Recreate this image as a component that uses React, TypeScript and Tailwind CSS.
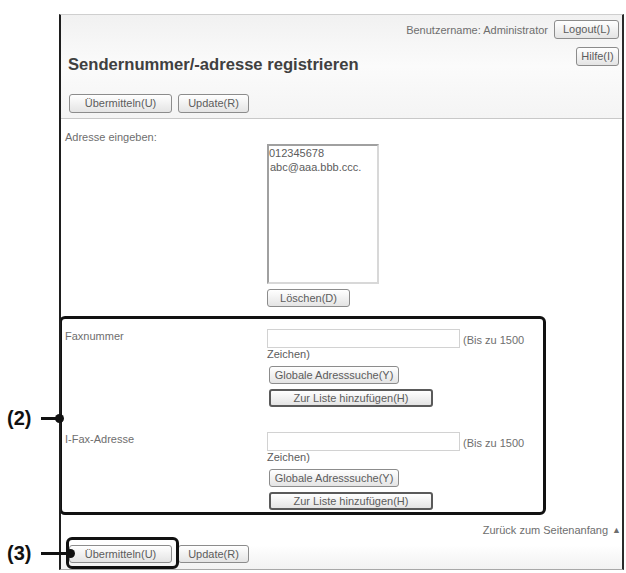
import React from "react";

const font = { fontFamily: '"Liberation Sans", Arial, sans-serif' };

function Btn({ className = "", children }: { className?: string; children: React.ReactNode }) {
  return (
    <div
      className={`flex items-center justify-center rounded-[3px] bg-gradient-to-b from-white to-[#e4e4e4] text-[11px] leading-none text-[#5c5c5c] ${className}`}
    >
      {children}
    </div>
  );
}

function Field({ label }: { label: string }) {
  return (
    <div className="grid grid-cols-[205px_1fr]">
      <div className="pl-[3px] pt-[1px] text-[11px] leading-[12px] text-[#6e6e6e]">{label}</div>
      <div className="flex flex-col items-start">
        <div className="flex items-center">
          <div className="h-[19px] w-[193px] border border-[#d2d2d2] bg-white" />
          <div className="ml-[3px] pt-[2px] text-[11px] leading-[12px] text-[#6e6e6e]">(Bis zu 1500</div>
        </div>
        <div className="text-[11px] leading-[12px] text-[#5c5c5c]">Zeichen)</div>
        <Btn className="ml-[2px] mt-[6px] h-[18px] w-[130px] border border-[#8c8c8c]">Globale Adresssuche(Y)</Btn>
        <Btn className="ml-[2px] mt-[5px] h-[18px] w-[164px] border-2 border-[#5a5a5a]">Zur Liste hinzufügen(H)</Btn>
      </div>
    </div>
  );
}

export default function App() {
  return (
    <div className="relative h-[573px] w-[626px] overflow-hidden bg-white" style={font}>
      <div className="ml-[59px] mt-[14px] flex h-[556px] w-[565px] flex-col overflow-hidden border-b border-l-2 border-r-2 border-t border-b-[#a8a8a8] border-l-[#1e1e1e] border-r-[#2a2a2a] border-t-[#cfcfcf]">
        {/* header */}
        <div className="flex h-[104px] flex-col border-b border-[#c8c8c8] bg-gradient-to-b from-[#f1f1f1] via-[#fbfbfb] to-[#f4f4f4]">
          <div className="mt-[5px] flex items-center justify-end gap-[6px] pr-[3px]">
            <span className="text-[11px] leading-[12px] text-[#6e6e6e]">Benutzername: Administrator</span>
            <Btn className="h-[19px] w-[65px] border border-[#8c8c8c]">Logout(L)</Btn>
          </div>
          <div className="mt-[8px] flex items-start justify-between pr-[3px]">
            <div className="mt-[8px] pl-[7px] text-[16.6px] font-bold leading-[20px] text-[#404040]">
              Sendernummer/-adresse registrieren
            </div>
            <Btn className="h-[19px] w-[43px] border border-[#8c8c8c]">Hilfe(I)</Btn>
          </div>
          <div className="mt-[19px] flex gap-[6px] pl-[8px]">
            <Btn className="h-[19px] w-[103px] border border-[#8c8c8c]">Übermitteln(U)</Btn>
            <Btn className="h-[19px] w-[71px] border border-[#8c8c8c]">Update(R)</Btn>
          </div>
        </div>

        {/* address list */}
        <div className="grid grid-cols-[206px_1fr] pt-[12px]">
          <div className="pl-[4px] text-[11px] leading-[12px] text-[#6e6e6e]">Adresse eingeben:</div>
          <div className="flex flex-col items-start">
            <div className="mt-[13px] h-[140px] w-[112px] border-2 border-b-[#d8d8d8] border-l-[#a0a0a0] border-r-[#d8d8d8] border-t-[#a0a0a0] bg-white text-[11px] leading-[14px] text-[#5c5c5c]">
              <div>012345678</div>
              <div className="pl-[1px]">abc@aaa.bbb.ccc.</div>
            </div>
            <Btn className="mt-[5px] h-[18px] w-[83px] border border-[#8c8c8c]">Löschen(D)</Btn>
          </div>
        </div>

        {/* highlighted section (2) */}
        <div className="ml-[-2px] mt-[9px] w-[487px] rounded-[6px] border-[3px] border-[#111] pb-[2px] pt-[10px]">
          <Field label="Faxnummer" />
          <div className="mt-[25px]">
            <Field label="I-Fax-Adresse" />
          </div>
        </div>

        <div className="mt-[9px] flex justify-end pr-[1px] text-[11px] leading-[12px] text-[#6e6e6e]">
          <span>Zurück zum Seitenanfang</span>
          <span className="ml-[4px] text-[9px]">▲</span>
        </div>

        <div className="mt-[9px] flex flex-1 gap-[6px] bg-gradient-to-b from-white to-[#f2f2f2] pl-[8px]">
          <Btn className="h-[18px] w-[103px] border border-[#8c8c8c]">Übermitteln(U)</Btn>
          <Btn className="h-[18px] w-[71px] border border-[#8c8c8c]">Update(R)</Btn>
        </div>
      </div>

      {/* annotation (2) */}
      <div className="absolute left-[7px] top-[407px] flex items-center">
        <span className="text-[20px] font-bold leading-[22px] text-[#111]">(2)</span>
        <span className="ml-[10px] h-[3px] w-[16px] bg-[#111]" />
        <span className="ml-[-2px] h-[9px] w-[9px] rounded-full bg-[#111]" />
      </div>

      {/* annotation (3) */}
      <div className="absolute left-[7px] top-[542px] flex items-center">
        <span className="text-[20px] font-bold leading-[22px] text-[#111]">(3)</span>
        <span className="ml-[10px] h-[3px] w-[27px] bg-[#111]" />
        <span className="ml-[-2px] h-[9px] w-[9px] rounded-full bg-[#111]" />
      </div>
      <div className="absolute left-[66px] top-[537px] h-[32px] w-[113px] rounded-[6px] border-[3px] border-[#111]" />
    </div>
  );
}
